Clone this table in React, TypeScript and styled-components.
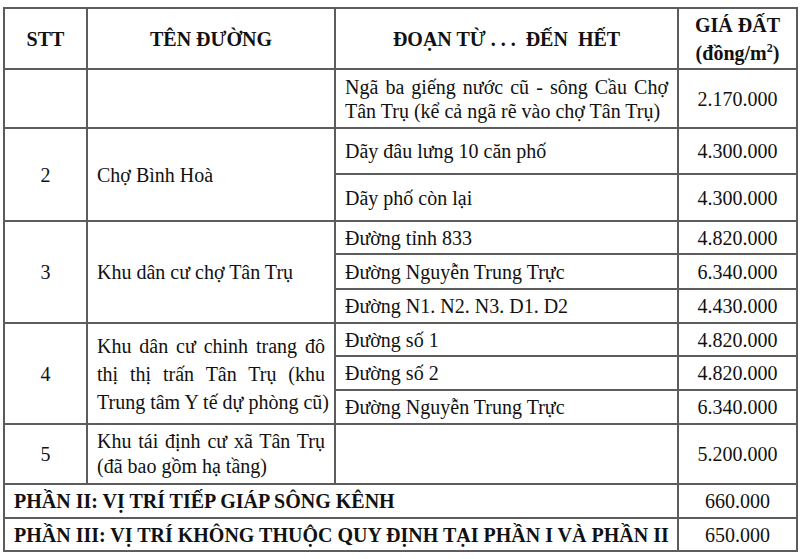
import styled, { createGlobalStyle } from "styled-components";

const GlobalStyle = createGlobalStyle`
  html, body { margin: 0; padding: 0; background: #fff; }
  body {
    font-family: "Liberation Serif", "Times New Roman", serif;
    color: #111;
  }
`;

const Page = styled.div`
  padding: 7px 0 0 3px;
`;

const Table = styled.table`
  border-collapse: collapse;
  table-layout: fixed;
  width: 793px;
  font-size: 20px;
`;

const Row = styled.tr<{ $h: number }>`
  height: ${(p) => p.$h}px;
`;

const HeadCell = styled.th<{ $lh?: number }>`
  border: 2px solid #5c5c5c;
  padding: 0 6px;
  font-weight: 700;
  text-align: center;
  vertical-align: middle;
  line-height: ${(p) => p.$lh ?? 24}px;
  white-space: pre-wrap;
`;

const Cell = styled.td<{ $align?: "left" | "center"; $lh?: number; $bold?: boolean }>`
  border: 2px solid #5c5c5c;
  padding: 0 9px;
  vertical-align: middle;
  text-align: ${(p) => p.$align ?? "left"};
  line-height: ${(p) => p.$lh ?? 24}px;
  font-weight: ${(p) => (p.$bold ? 700 : 400)};
  white-space: nowrap;
`;

// one printed line of a justified paragraph; all but the last are stretched
const Line = styled.span<{ $last: boolean }>`
  display: block;
  text-align: justify;
  text-align-last: ${(p) => (p.$last ? "left" : "justify")};
`;

const Sup = styled.sup`
  font-size: 12px;
  line-height: 0;
`;

function Para({ lines }: { lines: string[] }) {
  return (
    <>
      {lines.map((l, i) => (
        <Line key={i} $last={i === lines.length - 1}>
          {l}
        </Line>
      ))}
    </>
  );
}

type Item = { text: string[]; price: string; h: number };
type Group = { stt: string; name: string[]; nameLh?: number; items: Item[] };

const groups: Group[] = [
  {
    stt: "",
    name: [],
    items: [
      {
        text: ["Ngã ba giếng nước cũ - sông Cầu Chợ", "Tân Trụ (kể cả ngã rẽ vào chợ Tân Trụ)"],
        price: "2.170.000",
        h: 59,
      },
    ],
  },
  {
    stt: "2",
    name: ["Chợ Bình Hoà"],
    items: [
      { text: ["Dãy đâu lưng 10 căn phố"], price: "4.300.000", h: 46 },
      { text: ["Dãy phố còn lại"], price: "4.300.000", h: 47 },
    ],
  },
  {
    stt: "3",
    name: ["Khu dân cư chợ Tân Trụ"],
    items: [
      { text: ["Đường tỉnh 833"], price: "4.820.000", h: 33 },
      { text: ["Đường Nguyễn Trung Trực"], price: "6.340.000", h: 35 },
      { text: ["Đường N1. N2. N3. D1. D2"], price: "4.430.000", h: 34 },
    ],
  },
  {
    stt: "4",
    name: ["Khu dân cư chinh trang đô", "thị thị trấn Tân Trụ (khu", "Trung tâm Y tế dự phòng cũ)"],
    nameLh: 28,
    items: [
      { text: ["Đường số 1"], price: "4.820.000", h: 33 },
      { text: ["Đường số 2"], price: "4.820.000", h: 34 },
      { text: ["Đường Nguyễn Trung Trực"], price: "6.340.000", h: 34 },
    ],
  },
  {
    stt: "5",
    name: ["Khu tái định cư xã Tân Trụ", "(đã bao gồm hạ tầng)"],
    nameLh: 25,
    items: [{ text: [], price: "5.200.000", h: 60 }],
  },
];

const parts = [
  { title: "PHẦN II: VỊ TRÍ TIẾP GIÁP SÔNG KÊNH", price: "660.000", h: 34 },
  { title: "PHẦN III: VỊ TRÍ KHÔNG THUỘC QUY ĐỊNH TẠI PHẦN I VÀ PHẦN II", price: "650.000", h: 33 },
];

export default function App() {
  return (
    <Page>
      <GlobalStyle />
      <Table>
        <colgroup>
          <col style={{ width: 83 }} />
          <col style={{ width: 248 }} />
          <col style={{ width: 343 }} />
          <col style={{ width: 119 }} />
        </colgroup>
        <thead>
          <Row $h={61}>
            <HeadCell>STT</HeadCell>
            <HeadCell>TÊN ĐƯỜNG</HeadCell>
            <HeadCell>{"ĐOẠN TỪ . . .  ĐẾN  HẾT"}</HeadCell>
            <HeadCell $lh={28}>
              GIÁ ĐẤT
              <br />
              (đồng/m<Sup>2</Sup>)
            </HeadCell>
          </Row>
        </thead>
        <tbody>
          {groups.map((g, gi) =>
            g.items.map((it, ii) => (
              <Row key={`${gi}-${ii}`} $h={it.h}>
                {ii === 0 && (
                  <>
                    <Cell rowSpan={g.items.length} $align="center">
                      {g.stt}
                    </Cell>
                    <Cell rowSpan={g.items.length} $lh={g.nameLh}>
                      <Para lines={g.name} />
                    </Cell>
                  </>
                )}
                <Cell>
                  <Para lines={it.text} />
                </Cell>
                <Cell $align="center">{it.price}</Cell>
              </Row>
            ))
          )}
          {parts.map((p) => (
            <Row key={p.title} $h={p.h}>
              <Cell colSpan={3} $bold>
                {p.title}
              </Cell>
              <Cell $align="center">{p.price}</Cell>
            </Row>
          ))}
        </tbody>
      </Table>
    </Page>
  );
}
